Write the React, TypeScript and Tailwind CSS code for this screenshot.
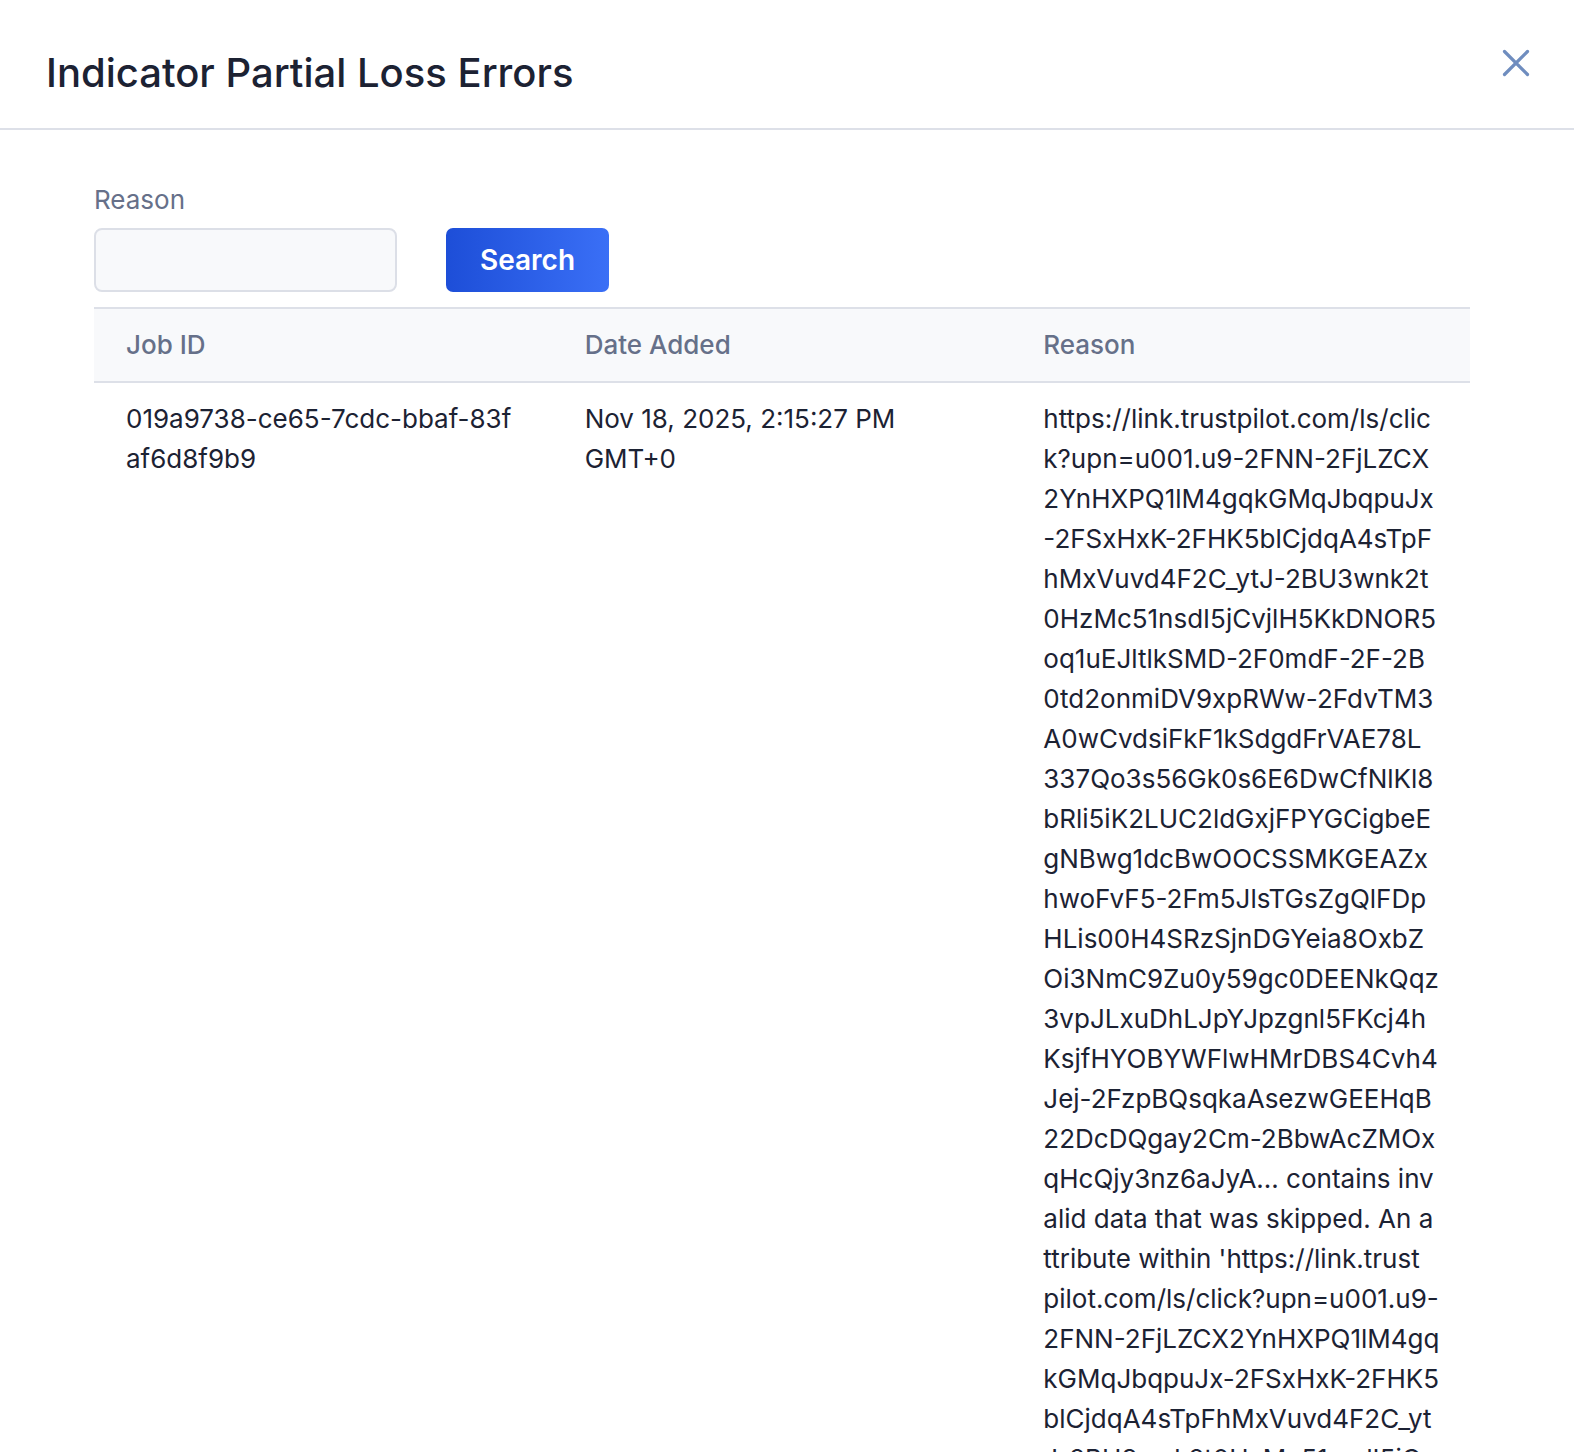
import React from "react";

// reason text as it wraps inside the column
const reasonLines = [
  "https://link.trustpilot.com/ls/clic",
  "k?upn=u001.u9-2FNN-2FjLZCX",
  "2YnHXPQ1lM4gqkGMqJbqpuJx",
  "-2FSxHxK-2FHK5blCjdqA4sTpF",
  "hMxVuvd4F2C_ytJ-2BU3wnk2t",
  "0HzMc51nsdI5jCvjlH5KkDNOR5",
  "oq1uEJltlkSMD-2F0mdF-2F-2B",
  "0td2onmiDV9xpRWw-2FdvTM3",
  "A0wCvdsiFkF1kSdgdFrVAE78L",
  "337Qo3s56Gk0s6E6DwCfNlKl8",
  "bRli5iK2LUC2ldGxjFPYGCigbeE",
  "gNBwg1dcBwOOCSSMKGEAZx",
  "hwoFvF5-2Fm5JlsTGsZgQlFDp",
  "HLis00H4SRzSjnDGYeia8OxbZ",
  "Oi3NmC9Zu0y59gc0DEENkQqz",
  "3vpJLxuDhLJpYJpzgnl5FKcj4h",
  "KsjfHYOBYWFlwHMrDBS4Cvh4",
  "Jej-2FzpBQsqkaAsezwGEEHqB",
  "22DcDQgay2Cm-2BbwAcZMOx",
  "qHcQjy3nz6aJyA... contains inv",
  "alid data that was skipped. An a",
  "ttribute within 'https://link.trust",
  "pilot.com/ls/click?upn=u001.u9-",
  "2FNN-2FjLZCX2YnHXPQ1lM4gq",
  "kGMqJbqpuJx-2FSxHxK-2FHK5",
  "blCjdqA4sTpFhMxVuvd4F2C_yt",
  "J-2BU3wnk2t0HzMc51nsdI5jC",
  "vjlH5KkDNOR5oq1uEJltlkSMD-",
  "2F0mdF-2F-2B0td2onmiDV9xpR",
  "Ww...' could not be parsed.",
];

const rows = [
  {
    jobId: "019a9738-ce65-7cdc-bbaf-83faf6d8f9b9",
    date: "Nov 18, 2025, 2:15:27 PM GMT+0",
    reason: reasonLines,
  },
];

export default function App() {
  return (
    <div className="min-h-screen bg-white text-[#1c2233] font-['Inter',sans-serif]">
      {/* Header */}
      <div className="flex h-[130px] items-center justify-between border-b-2 border-[#dde0e8] pl-[46px] pr-[38px]">
        <h1 className="mt-[18px] text-[40px] font-medium text-[#1c2233]">
          Indicator Partial Loss Errors
        </h1>
        <button className="-mt-[2px] flex h-[40px] w-[40px] items-center justify-center text-[#6f8dbf]">
          <svg width="32" height="32" viewBox="0 0 32 32" fill="none">
            <path d="M4.5 4.5L27.5 27.5M27.5 4.5L4.5 27.5" stroke="currentColor" strokeWidth="3.2" strokeLinecap="round" />
          </svg>
        </button>
      </div>

      {/* Body */}
      <div className="pl-[94px] pr-[104px] pt-[50px]">
        <label className="block text-[26px] leading-[40px] text-[#667089]">Reason</label>
        <div className="mt-[8px] flex items-center gap-[49px]">
          <input
            className="h-[64px] w-[303px] rounded-[8px] border-2 border-[#dcdfe7] bg-[#f8f9fb] px-4 text-[26px] outline-none"
            type="text"
          />
          <button className="h-[64px] w-[163px] rounded-[7px] bg-gradient-to-r from-[#1d4ed8] to-[#3a6ff6] text-[28px] font-semibold text-white">
            Search
          </button>
        </div>

        <table className="mt-[15px] w-full table-fixed border-collapse">
          <thead>
            <tr className="border-y-2 border-[#dde0e8] bg-[#f8f9fb]">
              <th className="px-[32px] py-[16px] text-left text-[26px] leading-[40px] font-medium text-[#667089]">Job ID</th>
              <th className="px-[32px] py-[16px] text-left text-[26px] leading-[40px] font-medium text-[#667089]">Date Added</th>
              <th className="px-[32px] py-[16px] text-left text-[26px] leading-[40px] font-medium text-[#667089]">Reason</th>
            </tr>
          </thead>
          <tbody>
            {rows.map((row, i) => (
              <tr key={i} className="align-top">
                <td className="px-[32px] py-[16px] text-[26px] leading-[40px] break-all">{row.jobId}</td>
                <td className="px-[32px] py-[16px] text-[26px] leading-[40px]">{row.date}</td>
                <td className="pl-[32px] pr-[28px] py-[16px] text-[26px] leading-[40px] break-all">
                  {row.reason.map((line, j) => (
                    <span key={j} className="block">{line}</span>
                  ))}
                </td>
              </tr>
            ))}
          </tbody>
        </table>
      </div>
    </div>
  );
}
